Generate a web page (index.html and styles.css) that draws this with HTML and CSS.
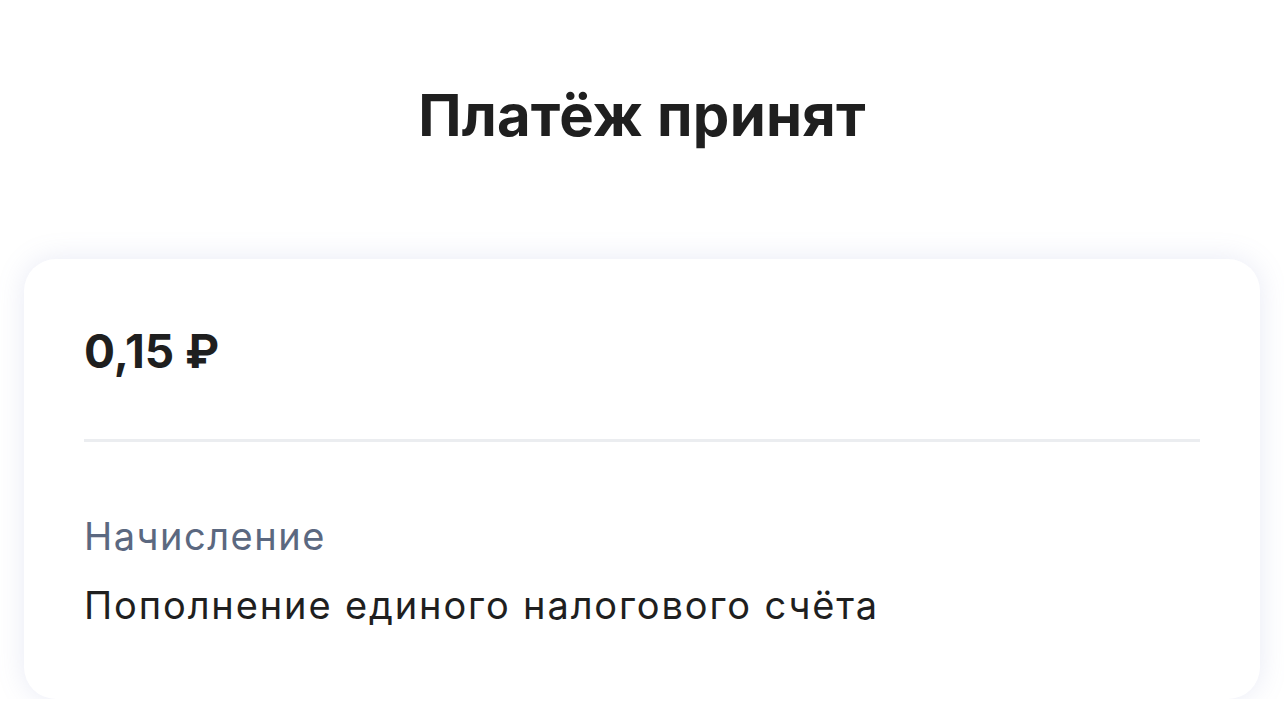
FILE: index.html
```html
<!DOCTYPE html>
<html lang="ru">
<head>
<meta charset="utf-8">
<link rel="stylesheet" href="styles.css">
</head>
<body>
<div class="page">
  <h1 class="title">Платёж принят</h1>
  <div class="card">
    <div class="amount">0,15 ₽</div>
    <div class="divider"></div>
    <div class="row">
      <div class="label">Начисление</div>
      <div class="value">Пополнение единого налогового счёта</div>
    </div>
  </div>
</div>
</body>
</html>
```
FILE: styles.css
```css
html, body {
  margin: 0;
  padding: 0;
  background: #ffffff;
}
body {
  font-family: Inter, "Noto Sans", sans-serif;
  color: #1f1f1f;
}
.page {
  display: flex;
  flex-direction: column;
  padding: 0 24px;
}
.title {
  margin: 80px 0 0;
  text-align: center;
  font-size: 58px;
  line-height: 70px;
  font-weight: 700;
  letter-spacing: 0.2px;
  color: #1f1f1f;
}
.card {
  margin-top: 109px;
  background: #fff;
  border-radius: 32px;
  box-shadow: 0 0 28px rgba(130, 140, 200, 0.18);
  padding: 64px 60px 64px;
  height: 440px;
  box-sizing: border-box;
}
.amount {
  font-size: 46px;
  line-height: 56px;
  font-weight: 700;
  color: #1f1f1f;
}
.divider {
  height: 3px;
  background: #ebedf0;
  margin-top: 60px;
}
.row {
  margin-top: 68px;
}
.label {
  font-size: 38px;
  line-height: 52px;
  letter-spacing: 1.5px;
  color: #5b6880;
}
.value {
  margin-top: 17px;
  font-size: 38px;
  line-height: 52px;
  letter-spacing: 1.87px;
  color: #1f1f1f;
}
```
